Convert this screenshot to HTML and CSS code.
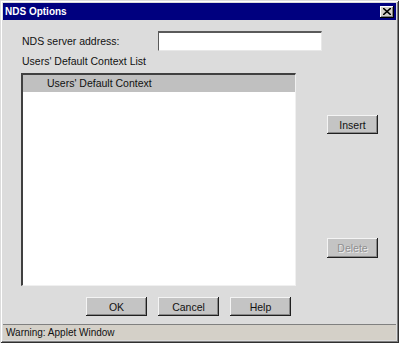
FILE: index.html
```html
<!DOCTYPE html>
<html lang="en">
<head>
    <meta charset="UTF-8">
    <title>NDS Options</title>
    <link rel="stylesheet" href="styles.css">
</head>
<body>
    <div class="window">
        <div class="titlebar">
            <span class="title">NDS Options</span>
            <button class="close">
                <svg width="8" height="7" viewBox="0 0 8 7"><path d="M0 0L8 7M8 0L0 7" stroke="#000" stroke-width="1.6"/></svg>
            </button>
        </div>
        <div class="main">
            <div class="left">
                <div class="server-row">
                    <label class="server-label">NDS server address:</label>
                    <div class="field">
                        <span class="caret"></span>
                        <span class="dot"></span><span class="dot"></span><span class="dot"></span>
                    </div>
                </div>
                <div class="list-label">Users' Default Context List</div>
                <div class="list">
                    <div class="list-header">Users' Default Context</div>
                </div>
            </div>
            <div class="side">
                <button class="btn insert">Insert</button>
                <button class="btn delete" disabled>Delete</button>
            </div>
        </div>
        <div class="actions">
            <button class="btn wide">OK</button>
            <button class="btn wide">Cancel</button>
            <button class="btn wide">Help</button>
        </div>
        <div class="status">Warning: Applet Window</div>
    </div>
</body>
</html>
```

FILE: styles.css
```css
* {
    box-sizing: border-box;
    margin: 0;
    padding: 0;
}
body {
    background: #dcdcdc;
    font-family: "Liberation Sans", Arial, sans-serif;
    font-size: 10.5px;
    color: #111;
}
.window {
    width: 399px;
    height: 343px;
    padding: 3px;
    display: flex;
    flex-direction: column;
    background: #dcdcdc;
    box-shadow: inset 1px 1px #dcdcdc, inset -1px -1px #303030, inset 2px 2px #fff, inset -2px -2px #808080;
}
.titlebar {
    height: 17px;
    background: #00007f;
    display: flex;
    align-items: center;
    justify-content: space-between;
    padding: 0 2px 0 2px;
}
.title {
    color: #fff;
    font-weight: bold;
    font-size: 10px;
}
.close {
    width: 14px;
    height: 12px;
    border: none;
    background: #d4d0c8;
    box-shadow: inset -1px -1px #000, inset 1px 1px #fff, inset -2px -2px #808080;
    display: flex;
    align-items: center;
    justify-content: center;
    padding-bottom: 1px;
}
.main {
    display: flex;
    padding: 11px 0 0 18px;
}
.left {
    width: 275px;
}
.server-row {
    display: flex;
    width: 302px;
    height: 20px;
    align-items: center;
}
.server-label {
    width: 137px;
    padding-left: 1px;
}
.field {
    width: 164px;
    height: 20px;
    background: #fff;
    border-top: 2px solid #5a5a5a;
    border-left: 1px solid #5a5a5a;
    border-right: 1px solid #e8e8e8;
    border-bottom: 1px solid #e8e8e8;
    display: flex;
    align-items: center;
    padding-left: 2px;
}
.caret {
    width: 1px;
    height: 12px;
    background: #000;
    margin-right: 38px;
}
.dot {
    width: 1px;
    height: 1px;
    background: #333;
    margin-right: 41px;
    margin-top: 6px;
}
.list-label {
    margin-top: 2px;
    line-height: 16px;
    margin-bottom: 4px;
    padding-left: 1px;
}
.list {
    height: 213px;
    background: #fff;
    border-top: 2px solid #404040;
    border-left: 2px solid #404040;
    border-right: 1px solid #f0f0f0;
    border-bottom: 1px solid #f0f0f0;
}
.list-header {
    height: 17px;
    line-height: 17px;
    background: #c0c0c0;
    padding-left: 24px;
}
.side {
    display: flex;
    flex-direction: column;
    margin-left: 31px;
}
.btn {
    font-family: "Liberation Sans", Arial, sans-serif;
    font-size: 10.5px;
    color: #111;
    background: #c4c4c4;
    border: none;
    box-shadow: inset -1px -1px #202020, inset 1px 1px #f4f4f4, inset -2px -2px #888;
}
.insert {
    width: 51px;
    height: 19px;
    margin-top: 84px;
}
.delete {
    width: 51px;
    height: 20px;
    margin-top: 104px;
    color: #909090;
    text-shadow: 1px 1px #ececec;
}
.actions {
    display: flex;
    gap: 11px;
    padding-left: 83px;
    margin-top: 11px;
}
.wide {
    width: 61px;
    height: 19px;
}
.status {
    margin-top: 8px;
    height: 16px;
    line-height: 15px;
    background: #d4d0c8;
    border-top: 1px solid #808080;
    padding-left: 3px;
    font-size: 10px;
}
```
